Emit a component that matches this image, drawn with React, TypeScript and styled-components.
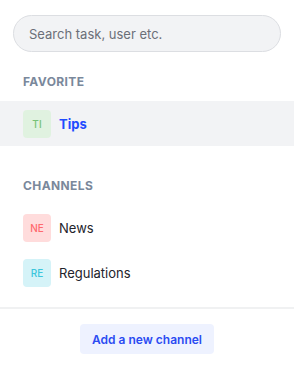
import React from 'react';
import styled, { createGlobalStyle } from 'styled-components';

const GlobalStyle = createGlobalStyle`
  body {
    margin: 0;
    background: #ffffff;
    font-family: Inter, "Noto Sans", sans-serif;
  }
`;

const Sidebar = styled.div`
  width: 294px;
  height: 368px;
  display: flex;
  flex-direction: column;
  background: #ffffff;
`;

const SearchWrap = styled.div`
  padding: 15px 13px 0;
`;

const SearchInput = styled.input`
  box-sizing: border-box;
  width: 100%;
  height: 37px;
  border: 1px solid #dcdee2;
  border-radius: 19px;
  background: #f2f3f5;
  padding: 0 15px;
  font-family: inherit;
  font-size: 13px;
  color: #333;
  outline: none;

  &::placeholder {
    color: #6b6f78;
  }
`;

const SectionLabel = styled.div<{ $top: number }>`
  margin-top: ${(p) => p.$top}px;
  padding: 0 23px;
  height: 16px;
  line-height: 16px;
  font-size: 12px;
  font-weight: 700;
  letter-spacing: 0.4px;
  color: #7a889b;
  text-transform: uppercase;
`;

const List = styled.div`
  margin-top: 11px;
  display: flex;
  flex-direction: column;
`;

const Row = styled.div<{ $active?: boolean }>`
  height: 45px;
  display: flex;
  align-items: center;
  gap: 8px;
  padding: 0 23px;
  background: ${(p) => (p.$active ? '#f2f3f5' : 'transparent')};
`;

const Avatar = styled.div<{ $bg: string; $fg: string }>`
  width: 28px;
  height: 28px;
  border-radius: 4px;
  background: ${(p) => p.$bg};
  color: ${(p) => p.$fg};
  display: flex;
  align-items: center;
  justify-content: center;
  font-size: 10px;
  font-weight: 500;
`;

const RowName = styled.span<{ $active?: boolean }>`
  font-size: 13px;
  font-weight: ${(p) => (p.$active ? 700 : 400)};
  color: ${(p) => (p.$active ? '#1f4bff' : '#22232b')};
`;

const Divider = styled.div`
  margin-top: 12px;
  height: 2px;
  background: #f0f1f2;
`;

const Footer = styled.div`
  display: flex;
  justify-content: center;
  padding-top: 15px;
`;

const AddButton = styled.button`
  height: 30px;
  width: 134px;
  border: none;
  border-radius: 4px;
  background: #eef2ff;
  color: #2b4bf2;
  font-family: inherit;
  font-size: 12px;
  font-weight: 600;
  cursor: pointer;
`;

const palette = {
  green: { bg: '#e0f2e0', fg: '#77c277' },
  red: { bg: '#ffdcdc', fg: '#ff6a6e' },
  cyan: { bg: '#d5f3f8', fg: '#3cc6dc' },
};

const channels = [
  { name: 'News', code: 'NE', color: palette.red },
  { name: 'Regulations', code: 'RE', color: palette.cyan },
];

export default function App() {
  return (
    <>
      <GlobalStyle />
      <Sidebar>
        <SearchWrap>
          <SearchInput placeholder="Search task, user etc." />
        </SearchWrap>

        <SectionLabel $top={22}>Favorite</SectionLabel>
        <List>
          <Row $active>
            <Avatar $bg={palette.green.bg} $fg={palette.green.fg}>TI</Avatar>
            <RowName $active>Tips</RowName>
          </Row>
        </List>

        <SectionLabel $top={32}>Channels</SectionLabel>
        <List>
          {channels.map((c) => (
            <Row key={c.code}>
              <Avatar $bg={c.color.bg} $fg={c.color.fg}>{c.code}</Avatar>
              <RowName>{c.name}</RowName>
            </Row>
          ))}
        </List>

        <Divider />
        <Footer>
          <AddButton>Add a new channel</AddButton>
        </Footer>
      </Sidebar>
    </>
  );
}
